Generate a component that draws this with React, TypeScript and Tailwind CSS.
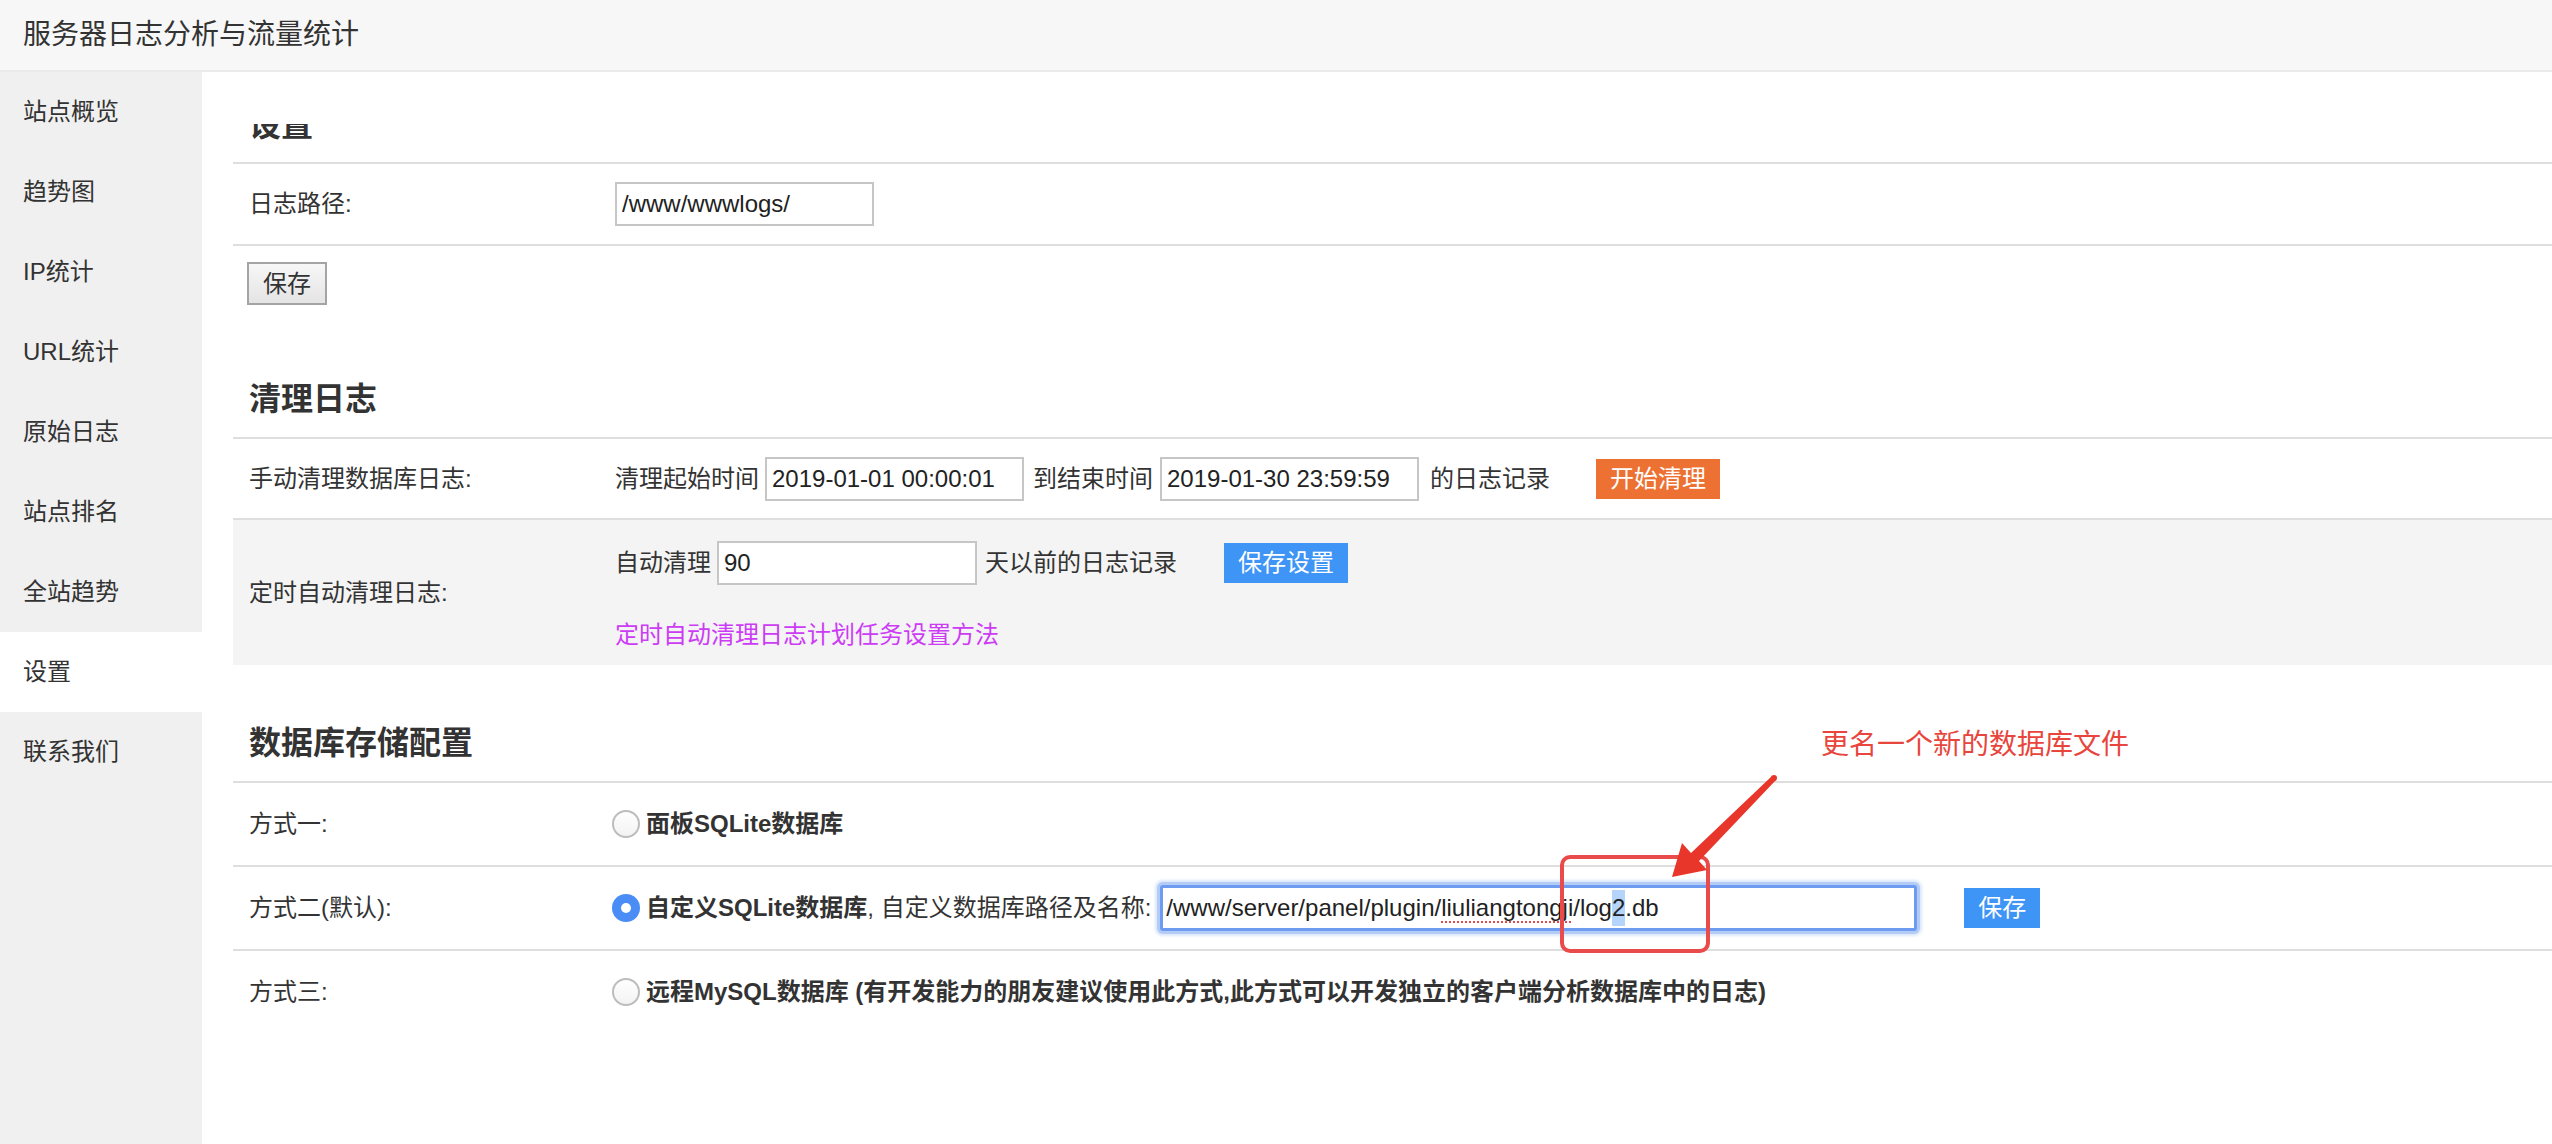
import React from 'react';

const navItems = ['站点概览', '趋势图', 'IP统计', 'URL统计', '原始日志', '站点排名', '全站趋势', '设置', '联系我们'];

function Label({ children }: { children: React.ReactNode }) {
  return <div className="w-[382px] shrink-0 pl-[16px]">{children}</div>;
}

function TextBox({ value, width }: { value: string; width: string }) {
  return (
    <input
      readOnly
      value={value}
      className={`${width} h-[44px] border-2 border-[#c6c6c6] bg-white px-[5px] text-[24px] text-[#222] outline-none`}
    />
  );
}

function Radio({ checked }: { checked?: boolean }) {
  if (checked) {
    return (
      <div className="ml-[-3px] flex h-[28px] w-[28px] shrink-0 items-center justify-center rounded-full bg-[#4a8df6]">
        <div className="h-[10px] w-[10px] rounded-full bg-white" />
      </div>
    );
  }
  return <div className="ml-[-3px] h-[28px] w-[28px] shrink-0 rounded-full border-2 border-[#bdbdbd] bg-gradient-to-b from-white to-[#f3f3f3]" />;
}

export default function App() {
  return (
    <div
      className="relative flex h-[1144px] w-full flex-col overflow-hidden bg-white text-[24px] text-[#333]"
      style={{ fontFamily: '"Liberation Sans", "Noto Sans CJK SC", sans-serif' }}
    >
      {/* Header */}
      <div className="flex h-[72px] shrink-0 items-center border-b-2 border-[#ebebeb] bg-[#f7f7f7] pl-[23px] text-[28px] text-[#333]">
        服务器日志分析与流量统计
      </div>

      <div className="flex flex-1">
        {/* Sidebar */}
        <div className="w-[202px] shrink-0 bg-[#f0f0f0]">
          {navItems.map((item) => (
            <div
              key={item}
              className={`flex h-[80px] items-center pl-[23px] text-[24px] text-[#333] ${item === '设置' ? 'bg-white' : ''}`}
            >
              {item}
            </div>
          ))}
        </div>

        {/* Main */}
        <div className="flex-1 pl-[31px]">
          <div className="h-[52px]" />

          {/* 设置 (scrolled, top cut off) */}
          <div className="h-[40px] overflow-hidden border-b-2 border-[#dedede]">
            <div className="mt-[-15px] pl-[16px] text-[32px] font-bold leading-[32px]">设置</div>
          </div>

          <div className="flex h-[82px] items-center border-b-2 border-[#dedede]">
            <Label>日志路径:</Label>
            <TextBox value="/www/wwwlogs/" width="w-[259px]" />
          </div>

          <div className="pl-[14px] pt-[16px]">
            <button className="h-[43px] w-[80px] border-2 border-[#a4a4a4] bg-gradient-to-b from-[#f7f7f7] to-[#e4e4e4] text-[24px] text-[#333]">
              保存
            </button>
          </div>

          {/* 清理日志 */}
          <div className="border-b-2 border-[#dedede] pb-[22px] pl-[16px] pt-[78px] text-[32px] font-bold leading-[32px]">
            清理日志
          </div>

          <div className="flex h-[81px] items-center border-b-2 border-[#dedede]">
            <Label>手动清理数据库日志:</Label>
            <span>清理起始时间</span>
            <div className="ml-[6px]">
              <TextBox value="2019-01-01 00:00:01" width="w-[259px]" />
            </div>
            <span className="ml-[9px]">到结束时间</span>
            <div className="ml-[7px]">
              <TextBox value="2019-01-30 23:59:59" width="w-[259px]" />
            </div>
            <span className="ml-[11px]">的日志记录</span>
            <button className="ml-[46px] h-[40px] w-[124px] bg-[#ed7132] text-[24px] text-white">开始清理</button>
          </div>

          <div className="flex h-[145px] items-center bg-[#f4f4f4]">
            <Label>定时自动清理日志:</Label>
            <div className="flex flex-col pt-[2px]">
              <div className="flex items-center">
                <span>自动清理</span>
                <div className="ml-[6px]">
                  <TextBox value="90" width="w-[260px]" />
                </div>
                <span className="ml-[8px]">天以前的日志记录</span>
                <button className="ml-[47px] h-[40px] w-[124px] bg-[#3f95f6] text-[24px] text-white">保存设置</button>
              </div>
              <a className="mt-[38px] leading-[24px] text-[#cc3cf5]">定时自动清理日志计划任务设置方法</a>
            </div>
          </div>

          {/* 数据库存储配置 */}
          <div className="border-b-2 border-[#dedede] pb-[22px] pl-[16px] pt-[62px] text-[32px] font-bold leading-[32px]">
            数据库存储配置
          </div>

          <div className="flex h-[84px] items-center border-b-2 border-[#dedede]">
            <Label>方式一:</Label>
            <Radio />
            <span className="ml-[6px] font-bold">面板SQLite数据库</span>
          </div>

          <div className="flex h-[84px] items-center border-b-2 border-[#dedede]">
            <Label>方式二(默认):</Label>
            <Radio checked />
            <span className="ml-[6px]">
              <b>自定义SQLite数据库</b>, 自定义数据库路径及名称:
            </span>
            <div className="ml-[9px] flex h-[46px] w-[757px] items-center rounded-[3px] border-[3px] border-[#6d9bf0] bg-white pl-[3px] text-[24px] text-[#222] shadow-[0_0_0_3px_#b3cbf7,0_0_3px_5px_#dbe7fb]">
              <span>/www/server/panel/plugin/</span>
              <span className="underline decoration-[#e04a4a] decoration-dotted decoration-2 underline-offset-[5px]">liuliangtongji</span>
              <span>/log</span>
              <span className="bg-[#b4d4fb]">2</span>
              <span>.db</span>
            </div>
            <button className="ml-[47px] h-[40px] w-[76px] bg-[#3f95f6] text-[24px] text-white">保存</button>
          </div>

          <div className="flex h-[82px] items-center">
            <Label>方式三:</Label>
            <Radio />
            <span className="ml-[6px] font-bold">
              远程MySQL数据库 (有开发能力的朋友建议使用此方式,此方式可以开发独立的客户端分析数据库中的日志)
            </span>
          </div>
        </div>
      </div>

      {/* Annotation overlay */}
      <div className="absolute left-[1821px] top-[729px] text-[28px] leading-[32px] text-[#e8453c]">更名一个新的数据库文件</div>
      <div className="absolute left-[1560px] top-[855px] h-[98px] w-[150px] rounded-[10px] border-4 border-[#e94b4b]" />
      <svg className="absolute left-[1660px] top-[770px]" width="125" height="115" viewBox="0 0 125 115">
        <polygon points="12,107 22,73 31,83 112,6 116,10 39,91 47,100" fill="#e8362a" />
        <circle cx="114" cy="8" r="3" fill="#e8362a" />
      </svg>
    </div>
  );
}
